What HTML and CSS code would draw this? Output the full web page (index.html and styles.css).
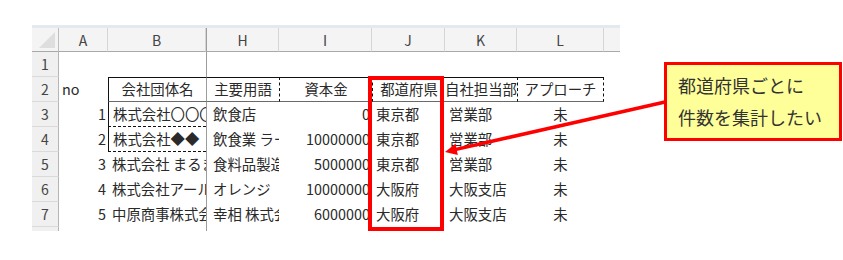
FILE: index.html
```html
<!DOCTYPE html>
<html lang="ja">
<head>
<meta charset="utf-8">
<title>Sheet</title>
<link rel="stylesheet" href="styles.css">
</head>
<body>
<div class="page">
  <div class="strip"></div>
  <div class="sheet">
    <div class="ch corner"><span class="tri"></span></div>
    <div class="ch">A</div>
    <div class="ch">B</div>
    <div class="ch fz">H</div>
    <div class="ch">I</div>
    <div class="ch">J</div>
    <div class="ch">K</div>
    <div class="ch">L</div>
    <div class="ch end"></div>

    <div class="rh">1</div>
    <div class="c"></div><div class="c"></div><div class="c fz"></div><div class="c"></div><div class="c"></div><div class="c"></div><div class="c"></div><div class="c"></div>

    <div class="rh">2</div>
    <div class="c left">no</div>
    <div class="c hd bl center">会社団体名</div>
    <div class="c hd fz center">主要用語</div>
    <div class="c hd dl center">資本金</div>
    <div class="c hd dl center">都道府県</div>
    <div class="c hd center">自社担当部</div>
    <div class="c hd dl dr center">アプローチ</div>
    <div class="c"></div>

    <div class="rh">3</div>
    <div class="c num">1</div>
    <div class="c bl db txt">株式会社〇〇〇</div>
    <div class="c fz txth">飲食店</div>
    <div class="c num">0</div>
    <div class="c txt">東京都</div>
    <div class="c txt">営業部</div>
    <div class="c center">未</div>
    <div class="c"></div>

    <div class="rh">4</div>
    <div class="c num">2</div>
    <div class="c bl db txt">株式会社◆◆</div>
    <div class="c fz txth">飲食業 ラーメン</div>
    <div class="c num">10000000</div>
    <div class="c txt">東京都</div>
    <div class="c txt">営業部</div>
    <div class="c center">未</div>
    <div class="c"></div>

    <div class="rh">5</div>
    <div class="c num">3</div>
    <div class="c txt">株式会社 まるまる</div>
    <div class="c fz txth">食料品製造</div>
    <div class="c num">5000000</div>
    <div class="c txt">東京都</div>
    <div class="c txt">営業部</div>
    <div class="c center">未</div>
    <div class="c"></div>

    <div class="rh">6</div>
    <div class="c num">4</div>
    <div class="c txt">株式会社アール</div>
    <div class="c fz txth">オレンジ</div>
    <div class="c num">10000000</div>
    <div class="c txt">大阪府</div>
    <div class="c txt">大阪支店</div>
    <div class="c center">未</div>
    <div class="c"></div>

    <div class="rh">7</div>
    <div class="c num">5</div>
    <div class="c txt">中原商事株式会社</div>
    <div class="c fz txth">幸相 株式会社</div>
    <div class="c num">6000000</div>
    <div class="c txt">大阪府</div>
    <div class="c txt">大阪支店</div>
    <div class="c center">未</div>
    <div class="c"></div>

    <div class="rh last"></div>
    <div class="c"></div><div class="c"></div><div class="c fz"></div><div class="c"></div><div class="c"></div><div class="c"></div><div class="c"></div><div class="c"></div>
  </div>

  <div class="highlight"></div>
  <svg class="arrow" width="843" height="260" viewBox="0 0 843 260">
    <line x1="665" y1="102" x2="455" y2="149.6" stroke="#ff0000" stroke-width="3.5"/>
    <polygon points="445,152 457.8,155 455.6,143.6" fill="#ff0000"/>
  </svg>
  <div class="callout">
    <div>都道府県ごとに</div>
    <div>件数を集計したい</div>
  </div>
</div>
</body>
</html>
```

FILE: styles.css
```css
html, body {
  margin: 0;
  padding: 0;
  background: #ffffff;
}

.page {
  position: relative;
  width: 843px;
  height: 260px;
  box-sizing: border-box;
  padding: 25px 0 0 32px;
  font-family: "Noto Sans CJK JP", "Noto Sans", sans-serif;
  color: #2a2a2a;
  overflow: hidden;
}

.strip {
  width: 588px;
  height: 3px;
  background: #e4e9ee;
}

.sheet {
  display: grid;
  width: 588px;
  grid-template-columns: 27px 49px 98px 73px 93px 73px 72px 87px 16px;
  grid-template-rows: 24px repeat(7, 25px) 4px;
  font-size: 14.4px;
}

.ch {
  background: #f4f4f4;
  border-right: 1px solid #d6d6d6;
  border-bottom: 1px solid #a9a9a9;
  box-sizing: border-box;
  display: flex;
  align-items: center;
  justify-content: center;
  color: #444;
  font-size: 14px;
  line-height: 1;
}

.ch.end {
  border-right: none;
}

.corner {
  position: relative;
  background: #f4f4f4;
  border-right: 1px solid #bdbdbd;
}

.tri {
  position: absolute;
  right: 3px;
  bottom: 3px;
  width: 0;
  height: 0;
  border-left: 16px solid transparent;
  border-bottom: 16px solid #dedede;
}

.rh {
  background: #f0f0f0;
  border-right: 1px solid #b5b5b5;
  border-bottom: 1px solid #dadada;
  box-sizing: border-box;
  display: flex;
  align-items: center;
  justify-content: center;
  color: #444;
  font-size: 14px;
  line-height: 1;
}

.rh.last {
  border-bottom: none;
}

.c {
  box-sizing: border-box;
  display: flex;
  align-items: center;
  white-space: nowrap;
  overflow: hidden;
  line-height: 1;
  background: #fff;
}

.fz {
  border-left: 1px solid #9c9c9c;
}

.left {
  padding-left: 3px;
}

.center {
  justify-content: center;
}

.num {
  justify-content: flex-end;
  padding-right: 2px;
}

.txt {
  padding-left: 4px;
}

.txth {
  padding-left: 6px;
}

.hd {
  border-top: 1px solid #111;
  border-bottom: 1px solid #6a6a6a;
}

.bl {
  border-left: 1px solid #111;
}

.db {
  border-bottom: 1px dashed #111;
}

.dl {
  border-left: 1px dashed #111;
}

.dr {
  border-right: 1px dashed #111;
}

.highlight {
  position: absolute;
  left: 368px;
  top: 76px;
  width: 76px;
  height: 155px;
  box-sizing: border-box;
  border: 4px solid #ff0000;
}

.arrow {
  position: absolute;
  left: 0;
  top: 0;
}

.callout {
  position: absolute;
  left: 664px;
  top: 62px;
  width: 178px;
  height: 79px;
  box-sizing: border-box;
  border: 3px solid #ff0000;
  background: #ffff99;
  padding: 4px 0 0 11px;
  font-size: 18px;
  line-height: 32px;
  color: #333;
  white-space: nowrap;
}
```
